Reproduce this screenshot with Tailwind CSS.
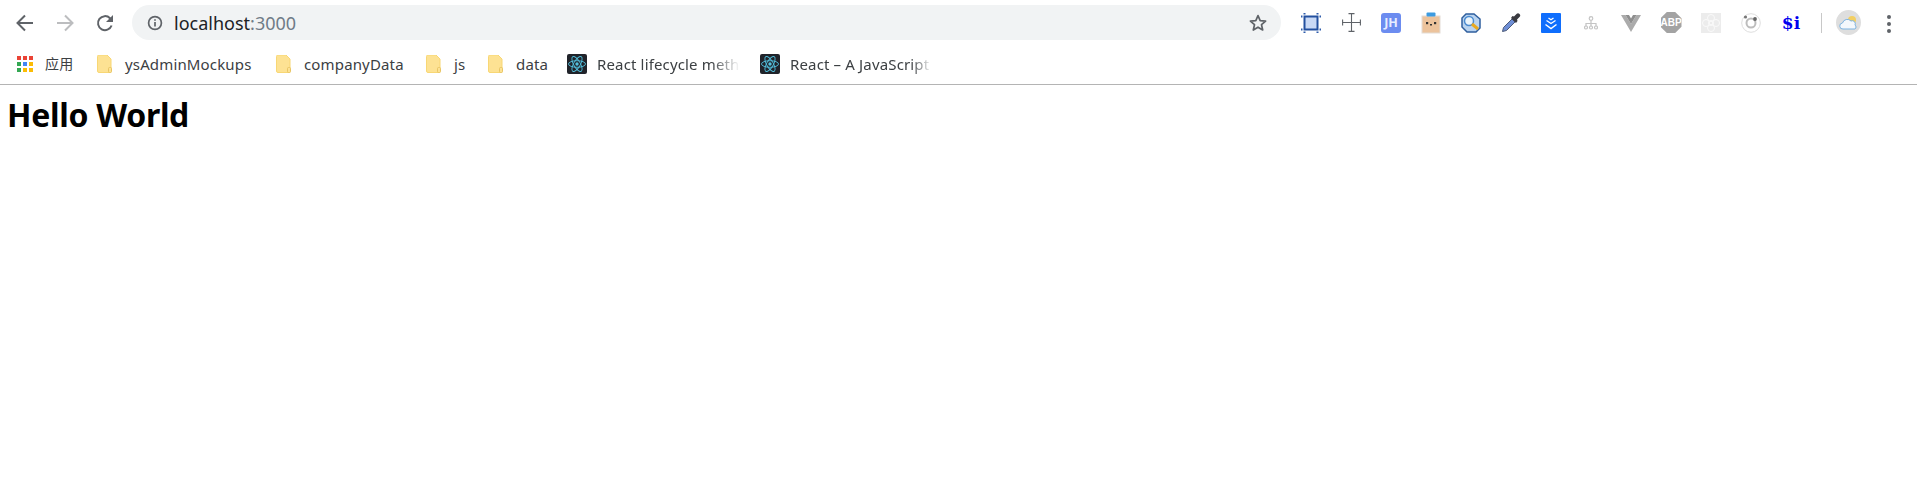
<!DOCTYPE html>
<html><head><meta charset="utf-8"><title>localhost</title>
<script src="https://cdn.jsdelivr.net/npm/@tailwindcss/browser@4"></script></head>
<body class="bg-white font-['Noto_Sans','Noto_Sans_CJK_SC',sans-serif] overflow-hidden">
<div class="h-[503px] flex flex-col">
<header class="h-[85px] border-b border-[#b4b4b4] flex flex-col shrink-0">
 <div class="h-[45px] pt-[5px] pl-[5px] flex items-start">
  <div class="flex h-[35px]">
   <div class="w-[40px] flex items-center justify-center"><svg width="20" height="20" viewBox="0 0 20 20" fill="none" stroke="#5f6368" stroke-width="2"><path d="M18 10H3M10 2.500 2.500 10l7.500 7.500"/></svg></div>
   <div class="w-[40px] flex items-center justify-center"><svg width="20" height="20" viewBox="0 0 20 20" fill="none" stroke="#bcbdbf" stroke-width="2"><path d="M2 10h15M10 2.500l7.500 7.500-7.500 7.500"/></svg></div>
   <div class="w-[40px] flex items-center justify-center"><svg width="20" height="20" viewBox="0 0 20 20" fill="none" stroke="#5f6368" stroke-width="2"><path d="M16.600 12.500A7 7 0 1 1 15 5.200L17.200 7.500"/><path d="M18 2v7h-7z" fill="#5f6368" stroke="none"/></svg></div>
  </div>
  <div class="ml-[7px] w-[1149px] h-[35px] rounded-full bg-[#f1f3f4] flex items-center pl-[15px] pr-[14px]">
   <svg width="16" height="16" viewBox="0 0 16 16" fill="none" stroke="#5f6368" stroke-width="1.700"><circle cx="8" cy="8" r="6.400"/><path d="M8 7v4.500M8 4.200v1.600"/></svg>
   <span class="ml-[11px] text-[18px] leading-[26px] text-[#202124]">localhost<span class="text-[#6f7b87]">:3000</span></span>
   <svg class="ml-auto relative left-px" width="20" height="20" viewBox="0 0 20 20" fill="none" stroke="#5f6368" stroke-width="1.700" stroke-linejoin="round"><path d="M10 2.600l2.200 5 5.400.5-4.100 3.600 1.200 5.300-4.700-2.800-4.700 2.800 1.200-5.300-4.100-3.600 5.400-.5z"/></svg>
  </div>
  <div class="ml-[10px] flex h-[35px]">
   <div class="w-[40px] flex items-center justify-center"><svg width="20" height="20" viewBox="0 0 20 20"><rect x="3.500" y="3.500" width="13" height="13" fill="#c9d9f5" stroke="#23509f" stroke-width="2"/><path d="M3.500 0v1.500M16.500 0v1.500M3.500 18.500V20M16.500 18.500V20M0 3.500h1.500M0 16.500h1.500M18.500 3.500H20M18.500 16.500H20" stroke="#2f5cab" stroke-width="2"/></svg></div>
   <div class="w-[40px] flex items-center justify-center"><svg width="19" height="19" viewBox="0 0 19 19" fill="none" stroke="#5f6368" stroke-width="1.100"><path d="M9.500 0v19M0 9.500h19M6.500.6h6M6.500 18.400h6M.6 6.500v6M18.400 6.500v6"/></svg></div>
   <div class="w-[40px] flex items-center justify-center"><div class="w-[20px] h-[20px] rounded-[3px] bg-[#6c8cf0] text-[#e8edff] text-[12.500px] font-bold leading-[20px] text-center">JH</div></div>
   <div class="w-[40px] flex items-center justify-center"><svg width="20" height="22" viewBox="0 0 20 22"><rect x="1" y="4" width="18" height="17" fill="#ecc39c" stroke="#e3dcd5"/><rect x="5.500" y="0.500" width="9" height="4" rx="1" fill="#3d9be0"/><rect x="5" y="10" width="2.200" height="2.200" fill="#333"/><rect x="13" y="10" width="2.200" height="2.200" fill="#333"/><rect x="9" y="12" width="2" height="1.500" fill="#333"/></svg></div>
   <div class="w-[40px] flex items-center justify-center"><svg width="20" height="20" viewBox="0 0 20 20"><path d="M5 1h8l6 5v9l-4 4H6L1 14V5z" fill="#b9d3ef" stroke="#2f5f9e" stroke-width="1.500"/><circle cx="8" cy="8" r="4.500" fill="#eaf4fb" stroke="#4b8bd0" stroke-width="1.500"/><path d="M11 11l6 5" stroke="#e9a91f" stroke-width="3"/></svg></div>
   <div class="w-[40px] flex items-center justify-center"><svg width="20" height="20" viewBox="0 0 20 20"><path d="M1.500 18.500l1-4L11 6l3 3-8.500 8.500z" fill="#6f8fd6" stroke="#4c5a78"/><path d="M10 5l5 5 1.500-2-.5-1.500 2.500-2.500a2 2 0 0 0-3-3L13 3.500 11.500 3z" fill="#3a3a40"/></svg></div>
   <div class="w-[40px] flex items-center justify-center"><svg width="20" height="20" viewBox="0 0 20 20"><rect width="20" height="20" rx="1" fill="#0f6efd"/><path d="M5.500 7.500 10 10.500l4.500-3M7.500 5 10 6.800 12.500 5" fill="none" stroke="#fff" stroke-width="1.300"/><path d="M4.500 11.500 10 15.500l5.500-4" fill="none" stroke="#fff" stroke-width="1.500"/></svg></div>
   <div class="w-[40px] flex items-center justify-center"><svg width="14" height="14" viewBox="0 0 14 14" fill="none" stroke="#c4c4c4" stroke-width="1.200"><circle cx="7" cy="2.500" r="1.800"/><path d="M7 4.500V7M2 10V7.500h10V10M7 7v3"/><circle cx="2" cy="11.500" r="1.500"/><circle cx="7" cy="11.500" r="1.500"/><circle cx="12" cy="11.500" r="1.500"/></svg></div>
   <div class="w-[40px] flex items-center justify-center"><svg width="20" height="18" viewBox="0 0 20 18"><path d="M0 1h4.500L10 10l5.500-9H20L10 18z" fill="#ababab"/><path d="M4.500 1h3.500L10 4.500 12 1h3.500L10 10z" fill="#8e8e8e"/></svg></div>
   <div class="w-[40px] flex items-center justify-center"><div class="w-[21px] h-[21px] bg-[#a3a3a3] [clip-path:polygon(30%_0,70%_0,100%_30%,100%_70%,70%_100%,30%_100%,0_70%,0_30%)] text-white text-[10px] font-bold leading-[21px] text-center font-['Liberation_Sans',sans-serif]">ABP</div></div>
   <div class="w-[40px] flex items-center justify-center"><svg width="20" height="20" viewBox="0 0 20 20" fill="none"><rect width="20" height="20" fill="#ececec"/><g stroke="#fafafa" stroke-width="1"><circle cx="10" cy="10" r="2.500"/><circle cx="5" cy="10" r="3.500"/><circle cx="15" cy="10" r="3.500"/><circle cx="10" cy="5" r="3.500"/><circle cx="10" cy="15" r="3.500"/></g></svg></div>
   <div class="w-[40px] flex items-center justify-center"><svg width="20" height="20" viewBox="0 0 20 20" fill="none"><circle cx="10" cy="10" r="9.300" stroke="#dedede" stroke-width="1"/><circle cx="10" cy="10" r="4.500" stroke="#bdbdbd" stroke-width="2"/><circle cx="4.500" cy="4" r="1.600" fill="#777"/><circle cx="14" cy="6" r="1.900" fill="#666"/></svg></div>
   <div class="w-[40px] flex items-center justify-center"><span class="text-[#0000ee] font-bold text-[17px] leading-[20px] font-['DejaVu_Serif',serif]">$i</span></div>
  </div>
  <div class="ml-[10px] mt-[8px] w-px h-[20px] bg-[#c8c8c8]"></div>
  <div class="ml-[14px] mt-[5px] w-[25px] h-[25px] rounded-full bg-[#dedede] flex items-center justify-center"><svg width="19" height="15" viewBox="0 0 19 15"><circle cx="13" cy="5" r="4" fill="#f3cf62"/><path d="M4 14a3 3 0 0 1-.5-6A5 5 0 0 1 12 6a3 3 0 0 1 4 4 2.500 2.500 0 0 1 0 4z" fill="#f4f8fc" stroke="#7db3e0"/></svg></div>
  <div class="ml-[26px] mt-[10px] flex flex-col gap-[3px]"><i class="block w-[4px] h-[4px] rounded-full bg-[#5f6368]"></i><i class="block w-[4px] h-[4px] rounded-full bg-[#5f6368]"></i><i class="block w-[4px] h-[4px] rounded-full bg-[#5f6368]"></i></div>
 </div>
 <nav class="h-[37px] flex items-center pl-[17px] text-[15px] leading-[20px] tracking-[0.15px] text-[#3c4043]">
  <svg class="w-[16px] h-[16px] shrink-0" viewBox="0 0 16 16"><g><rect x="0" y="0" width="4" height="4" fill="#ea4335"/><rect x="6" y="0" width="4" height="4" fill="#ea4335"/><rect x="12" y="0" width="4" height="4" fill="#ea4335"/><rect x="0" y="6" width="4" height="4" fill="#34a853"/><rect x="6" y="6" width="4" height="4" fill="#4285f4"/><rect x="12" y="6" width="4" height="4" fill="#fbbc05"/><rect x="0" y="12" width="4" height="4" fill="#34a853"/><rect x="6" y="12" width="4" height="4" fill="#fbbc05"/><rect x="12" y="12" width="4" height="4" fill="#fbbc05"/></g></svg>
  <span class="ml-[12px] w-[29px] whitespace-nowrap text-[14px]">应用</span>
  <svg class="ml-[23px] shrink-0" width="15" height="18" viewBox="0 0 15 18"><path d="M2 0h8l4 4v12a1.500 1.500 0 0 1-1.500 1.500H2A1.500 1.500 0 0 1 .5 16V1.500A1.500 1.500 0 0 1 2 0z" fill="#fde293" stroke="#f8d775"/><rect x="11.500" y="12.500" width="3" height="5" rx="1" fill="#fde293" stroke="#e8c565"/></svg>
  <span class="ml-[13px] w-[128px] whitespace-nowrap">ysAdminMockups</span>
  <svg class="ml-[23px] shrink-0" width="15" height="18" viewBox="0 0 15 18"><path d="M2 0h8l4 4v12a1.500 1.500 0 0 1-1.500 1.500H2A1.500 1.500 0 0 1 .5 16V1.500A1.500 1.500 0 0 1 2 0z" fill="#fde293" stroke="#f8d775"/><rect x="11.500" y="12.500" width="3" height="5" rx="1" fill="#fde293" stroke="#e8c565"/></svg>
  <span class="ml-[13px] w-[100px] whitespace-nowrap">companyData</span>
  <svg class="ml-[22px] shrink-0" width="15" height="18" viewBox="0 0 15 18"><path d="M2 0h8l4 4v12a1.500 1.500 0 0 1-1.500 1.500H2A1.500 1.500 0 0 1 .5 16V1.500A1.500 1.500 0 0 1 2 0z" fill="#fde293" stroke="#f8d775"/><rect x="11.500" y="12.500" width="3" height="5" rx="1" fill="#fde293" stroke="#e8c565"/></svg>
  <span class="ml-[13px] w-[11px] whitespace-nowrap">js</span>
  <svg class="ml-[23px] shrink-0" width="15" height="18" viewBox="0 0 15 18"><path d="M2 0h8l4 4v12a1.500 1.500 0 0 1-1.500 1.500H2A1.500 1.500 0 0 1 .5 16V1.500A1.500 1.500 0 0 1 2 0z" fill="#fde293" stroke="#f8d775"/><rect x="11.500" y="12.500" width="3" height="5" rx="1" fill="#fde293" stroke="#e8c565"/></svg>
  <span class="ml-[13px] w-[31px] whitespace-nowrap">data</span>
  <svg class="ml-[20px] shrink-0" width="20" height="20" viewBox="0 0 20 20" fill="none" stroke="#53c1de" stroke-width=".9"><rect width="20" height="20" rx="2" fill="#20232a" stroke="none"/><ellipse cx="10" cy="10" rx="8.500" ry="3.300"/><ellipse cx="10" cy="10" rx="8.500" ry="3.300" transform="rotate(60 10 10)"/><ellipse cx="10" cy="10" rx="8.500" ry="3.300" transform="rotate(120 10 10)"/><circle cx="10" cy="10" r="1.700" fill="#53c1de" stroke="none"/></svg>
  <span class="ml-[10px] w-[143px] overflow-hidden whitespace-nowrap [mask-image:linear-gradient(to_right,black_80%,transparent)]">React lifecycle meth</span>
  <svg class="ml-[20px] shrink-0" width="20" height="20" viewBox="0 0 20 20" fill="none" stroke="#53c1de" stroke-width=".9"><rect width="20" height="20" rx="2" fill="#20232a" stroke="none"/><ellipse cx="10" cy="10" rx="8.500" ry="3.300"/><ellipse cx="10" cy="10" rx="8.500" ry="3.300" transform="rotate(60 10 10)"/><ellipse cx="10" cy="10" rx="8.500" ry="3.300" transform="rotate(120 10 10)"/><circle cx="10" cy="10" r="1.700" fill="#53c1de" stroke="none"/></svg>
  <span class="ml-[10px] w-[142px] overflow-hidden whitespace-nowrap [mask-image:linear-gradient(to_right,black_85%,transparent)]">React – A JavaScript</span>
 </nav>
</header>
<main class="pl-[7px] pt-[9px]">
 <h1 class="text-[32px] leading-[42px] font-bold text-black tracking-[-0.3px]">Hello World</h1>
</main>
</div>
</body></html>
